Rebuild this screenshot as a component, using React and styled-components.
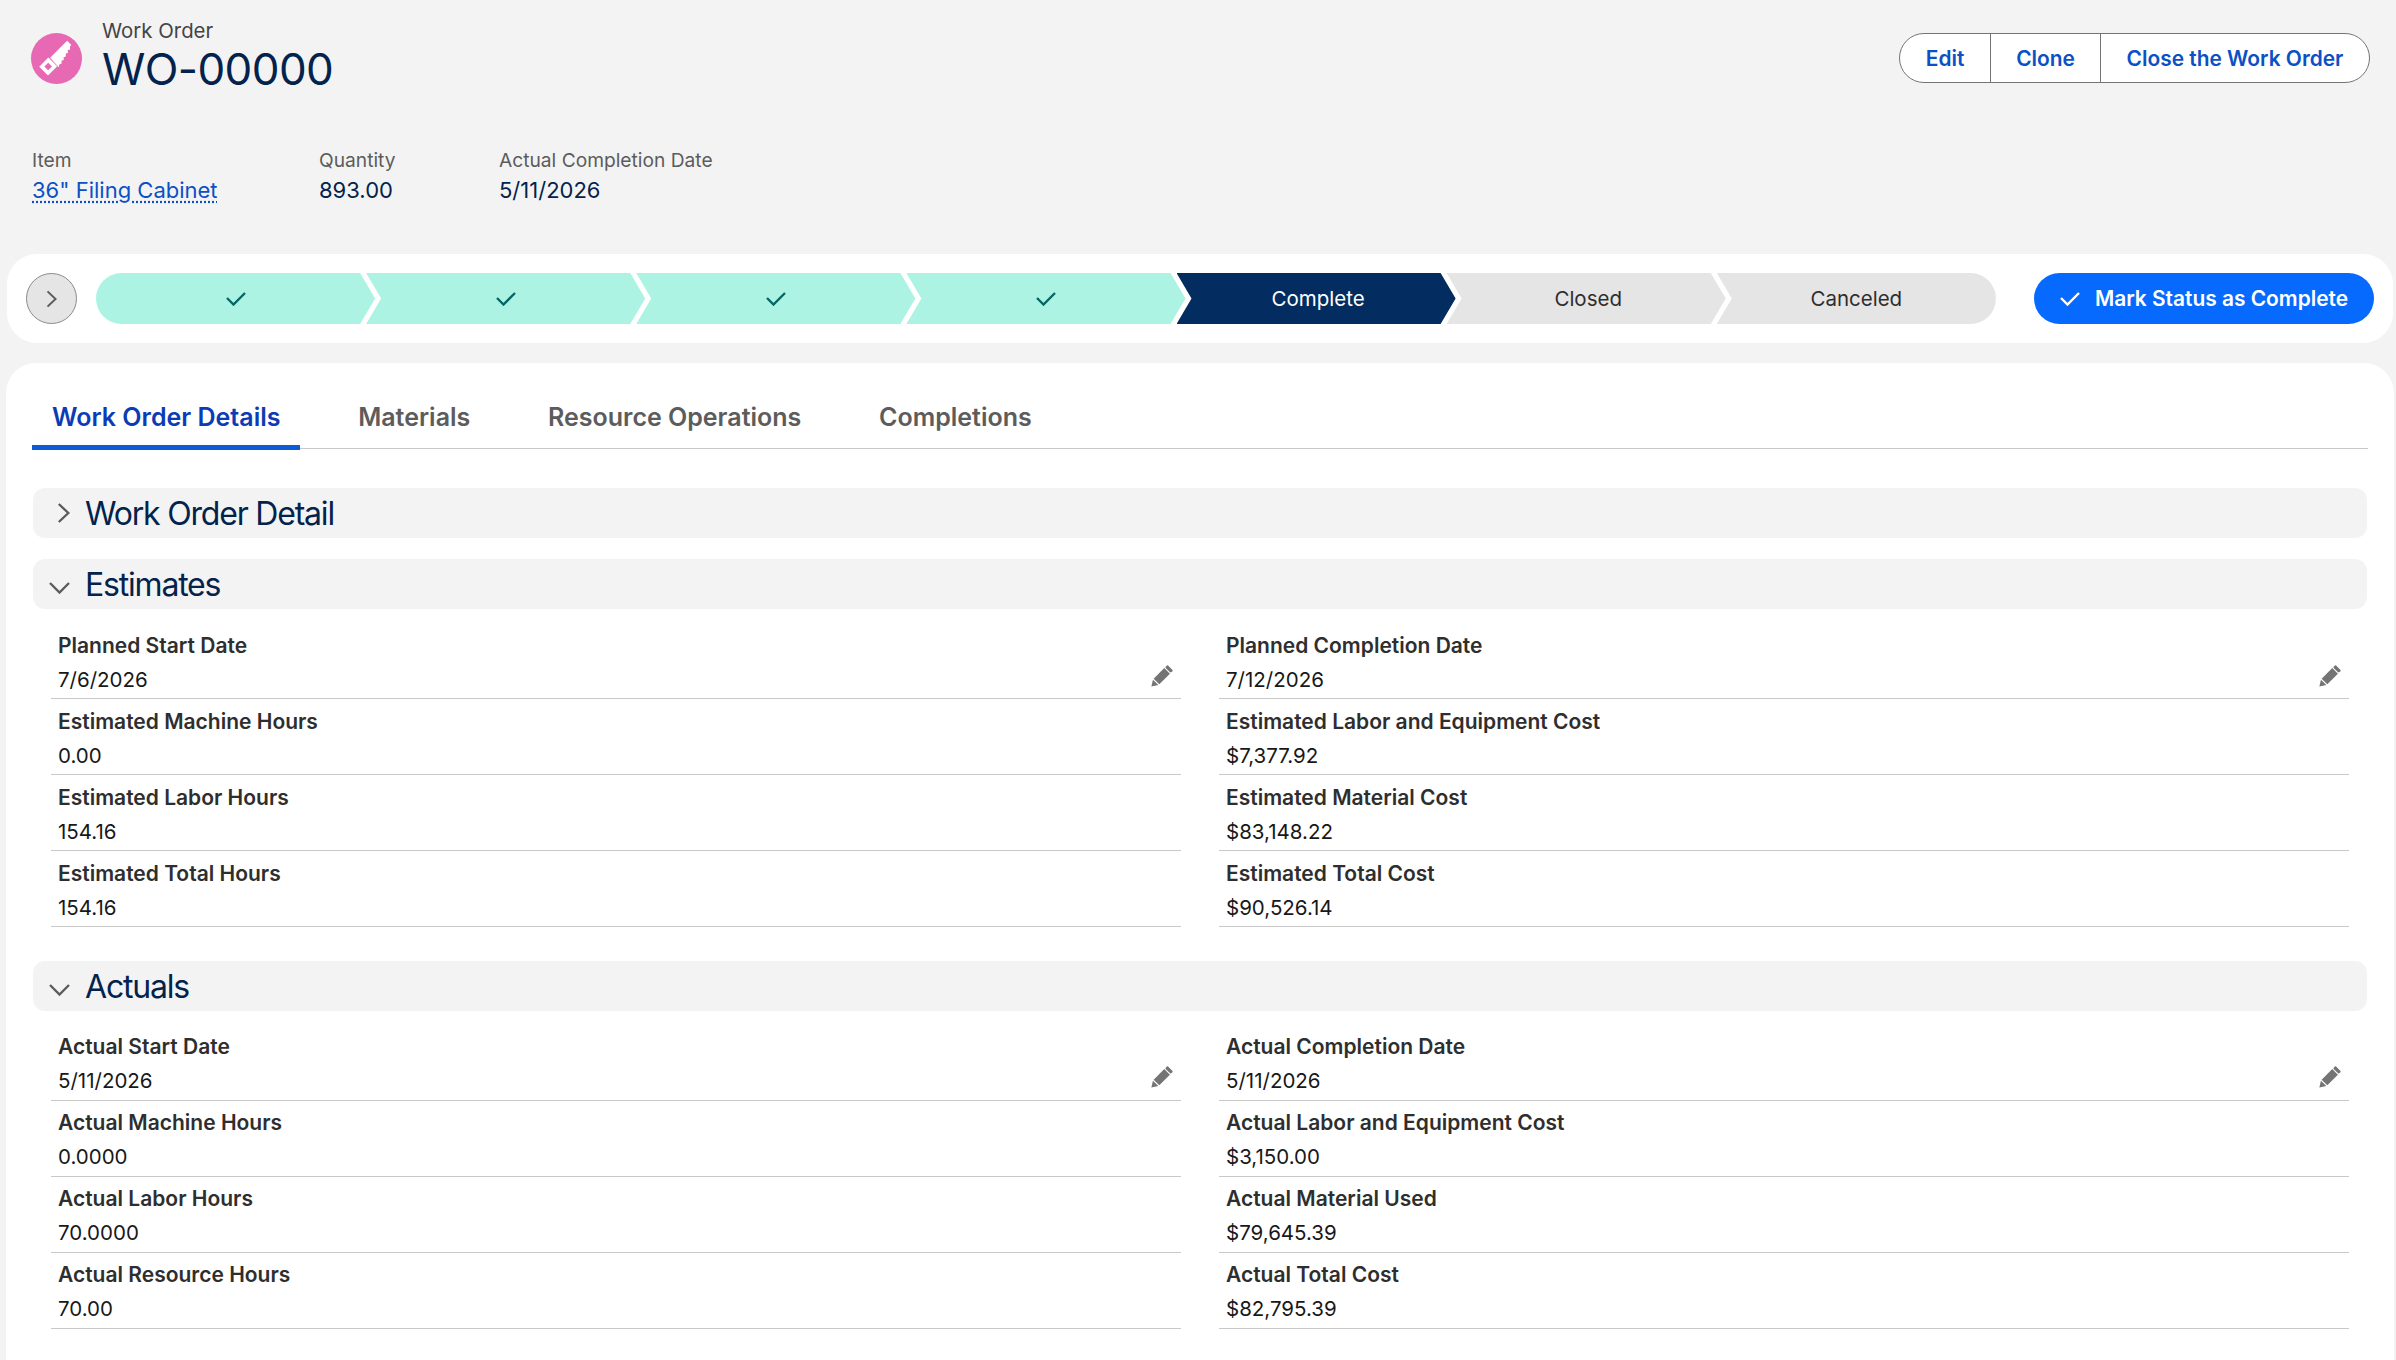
import styled, { createGlobalStyle } from "styled-components";

const GlobalStyle = createGlobalStyle`
  html, body {
    margin: 0;
    background: #f3f3f3;
    font-family: Inter, "Liberation Sans", sans-serif;
    color: #2e2e2e;
  }
  * { box-sizing: border-box; }
`;

const Page = styled.div`
  width: 2396px;
  height: 1360px;
  overflow: hidden;
  display: flex;
  flex-direction: column;
`;

const Header = styled.div`
  height: 254px;
  padding: 17px 26px 0 31px;
`;
const TitleRow = styled.div`
  display: flex;
  justify-content: space-between;
  align-items: flex-start;
`;
const TitleLeft = styled.div`
  display: flex;
  align-items: flex-start;
  gap: 20px;
`;
const RecordIcon = styled.div`
  width: 51px;
  height: 51px;
  margin-top: 16px;
  border-radius: 50%;
  background: #e769b4;
`;
const TitleText = styled.div`
  display: flex;
  flex-direction: column;
`;
const ObjectName = styled.div`
  font-size: 20.4px;
  line-height: 28px;
  color: #444444;
`;
const RecordName = styled.h1`
  margin: -1px 0 0;
  font-size: 44px;
  font-weight: 400;
  line-height: 50px;
  letter-spacing: -0.6px;
  color: #03234d;
`;
const ButtonGroup = styled.div`
  display: flex;
  height: 50px;
  margin-top: 16px;
  background: #fff;
  border: 1.5px solid #747474;
  border-radius: 25px;
`;
const GroupButton = styled.button`
  font: 600 20.9px Inter, sans-serif;
  color: #0b50c4;
  background: none;
  border: none;
  padding: 0;
  width: ${(p) => p.$w}px;
  & + & {
    border-left: 1.5px solid #747474;
  }
`;
const Highlights = styled.div`
  display: flex;
  margin: 53px 0 0 1px;
`;
const Highlight = styled.div`
  width: ${(p) => p.$w}px;
  display: flex;
  flex-direction: column;
`;
const HighlightLabel = styled.div`
  font-size: 19.2px;
  line-height: 26px;
  color: #5c5c5c;
`;
const HighlightValue = styled.div`
  font-size: 22px;
  line-height: 32px;
  margin-top: 1px;
  color: #03234d;
`;
const ItemLink = styled.a`
  color: #0b50c4;
  text-decoration: underline dotted #0b50c4;
  text-underline-offset: 3px;
`;

const PathCard = styled.div`
  display: flex;
  align-items: center;
  height: 89px;
  margin: 0 3px 0 7px;
  padding: 0 19px;
  background: #fff;
  border-radius: 30px;
`;
const PathToggle = styled.div`
  flex: none;
  width: 51px;
  height: 51px;
  display: flex;
  align-items: center;
  justify-content: center;
  margin-right: 19px;
  background: #e5e5e5;
  border: 1.5px solid #8a8a8a;
  border-radius: 50%;
`;
const Steps = styled.div`
  display: flex;
  width: 1900px;
  flex: none;
`;
const Step = styled.div`
  flex: none;
  width: 279.14px;
  height: 51px;
  display: flex;
  align-items: center;
  justify-content: center;
  padding-left: ${(p) => (p.$kind === "done" ? 0 : 4)}px;
  font-size: 20.5px;
  background: ${(p) => (p.$kind === "done" ? "#acf3e4" : p.$kind === "current" ? "#032d60" : "#e5e5e5")};
  color: ${(p) => (p.$kind === "current" ? "#fff" : "#2e2e2e")};
  clip-path: polygon(0 0, calc(100% - 15px) 0, 100% 50%, calc(100% - 15px) 100%, 0 100%, 15px 50%);
  & + & {
    margin-left: -9px;
  }
  &:first-child {
    border-radius: 26px 0 0 26px;
    clip-path: polygon(0 0, calc(100% - 15px) 0, 100% 50%, calc(100% - 15px) 100%, 0 100%);
  }
  &:last-child {
    padding-left: 0;
    border-radius: 0 26px 26px 0;
    clip-path: polygon(0 0, 100% 0, 100% 100%, 0 100%, 15px 50%);
  }
`;
const MarkButton = styled.button`
  flex: none;
  width: 340px;
  height: 51px;
  margin-left: 38px;
  display: flex;
  align-items: center;
  justify-content: center;
  gap: 15px;
  font: 600 20.9px Inter, sans-serif;
  color: #fff;
  background: #066afe;
  border: none;
  border-radius: 26px;
`;

const Card = styled.div`
  flex: 1;
  margin: 20px 2px 0 6px;
  padding: 0 26px;
  background: #fff;
  border-radius: 30px 30px 0 0;
`;
const Tabs = styled.div`
  display: flex;
  height: 86px;
  align-items: flex-end;
  border-bottom: 1.5px solid #c9c9c9;
`;
const Tab = styled.div`
  padding: 0 20px;
  margin-right: 37.7px;
  height: 52px;
  font-size: 25px;
  font-weight: 600;
  line-height: 38px;
  color: ${(p) => (p.$active ? "#0b3cb5" : "#5c5c5c")};
  border-bottom: 5px solid ${(p) => (p.$active ? "#0b5cd5" : "transparent")};
  margin-bottom: -1.5px;
`;
const SectionHeader = styled.div`
  display: flex;
  align-items: center;
  height: 50px;
  margin: ${(p) => p.$top}px 1px 0;
  background: #f3f3f3;
  border-radius: 12px;
  font-size: 32px;
  letter-spacing: -1.2px;
  color: #03234d;
`;
const ChevronSlot = styled.div`
  width: 52px;
  flex: none;
  display: flex;
  align-items: center;
  justify-content: flex-end;
  padding: ${(p) => (p.$open ? 7 : 0)}px 15px 0 0;
`;
const FieldGrid = styled.div`
  display: grid;
  grid-template-columns: 1130px 1130px;
  column-gap: 38px;
  margin: 14px 0 0 19px;
`;
const Field = styled.div`
  height: 76px;
  padding: ${(p) => p.$pad}px 0 0 7px;
  border-bottom: 1.5px solid #c9c9c9;
`;
const FieldLabel = styled.div`
  font-size: 21px;
  font-weight: 600;
  line-height: 28px;
  color: #2e2e2e;
`;
const FieldValueRow = styled.div`
  display: flex;
  justify-content: space-between;
  align-items: flex-start;
  margin-top: 6px;
`;
const FieldValue = styled.div`
  font-size: 20.5px;
  line-height: 28px;
  color: #181818;
`;
const PencilSlot = styled.div`
  display: flex;
  margin: -1px 8px 0 0;
`;

const SawIcon = () => (
  <svg width="51" height="51" viewBox="0 0 51 51">
    <g transform="rotate(-45 25.5 25.500)" fill="#fff">
      <path fillRule="evenodd" d="M7.500 19h13v12.500h-13zM11.300 22.600v5.300h5.400v-5.300z" />
      <path d="M21.500 20.500H45.500v6h-2l-2 2.200-2-1.200-2 2.200-2-1.100-2 2.100-2-1.100-2 2.100-2-1.100-2 2.100-2-1-2.500 1.500z" />
    </g>
  </svg>
);

const Check = ({ color = "#056764" }) => (
  <svg width="20" height="14" viewBox="0 0 20 14" fill="none" stroke={color} strokeWidth="2.400">
    <path d="M1 6l6.500 6.500L19 1" />
  </svg>
);

const ChevronRight = ({ w = 13, h = 20 }) => (
  <svg width={w} height={h} viewBox="0 0 13 20" fill="none" stroke="#5c5c5c" strokeWidth="2.400">
    <path d="M1.800 1l9.500 9-9.500 9" />
  </svg>
);

const ChevronDown = () => (
  <svg width="21" height="12" viewBox="0 0 21 12" fill="none" stroke="#5c5c5c" strokeWidth="2.400">
    <path d="M1 1l9.500 9.500L20 1" />
  </svg>
);

const Pencil = () => (
  <svg width="22" height="22" viewBox="0 0 22 22" fill="#747474">
    <g transform="rotate(-45 11 11)">
      <path d="M-4 11L2 7.200v7.600z" />
      <rect x="3.200" y="7" width="15" height="8" />
      <rect x="19.300" y="7" width="3.400" height="8" rx="1.200" />
    </g>
  </svg>
);

const estimates = [
  ["Planned Start Date", "7/6/2026", true],
  ["Planned Completion Date", "7/12/2026", true],
  ["Estimated Machine Hours", "0.00"],
  ["Estimated Labor and Equipment Cost", "$7,377.92"],
  ["Estimated Labor Hours", "154.16"],
  ["Estimated Material Cost", "$83,148.22"],
  ["Estimated Total Hours", "154.16"],
  ["Estimated Total Cost", "$90,526.14"],
];

const actuals = [
  ["Actual Start Date", "5/11/2026", true],
  ["Actual Completion Date", "5/11/2026", true],
  ["Actual Machine Hours", "0.0000"],
  ["Actual Labor and Equipment Cost", "$3,150.00"],
  ["Actual Labor Hours", "70.0000"],
  ["Actual Material Used", "$79,645.39"],
  ["Actual Resource Hours", "70.00"],
  ["Actual Total Cost", "$82,795.39"],
];

const Fields = ({ rows, pad }) => (
  <FieldGrid>
    {rows.map(([label, value, editable]) => (
      <Field key={label} $pad={pad}>
        <FieldLabel>{label}</FieldLabel>
        <FieldValueRow>
          <FieldValue>{value}</FieldValue>
          {editable && (
            <PencilSlot>
              <Pencil />
            </PencilSlot>
          )}
        </FieldValueRow>
      </Field>
    ))}
  </FieldGrid>
);

export default function App() {
  return (
    <Page>
      <GlobalStyle />
      <Header>
        <TitleRow>
          <TitleLeft>
            <RecordIcon>
              <SawIcon />
            </RecordIcon>
            <TitleText>
              <ObjectName>Work Order</ObjectName>
              <RecordName>WO-00000</RecordName>
            </TitleText>
          </TitleLeft>
          <ButtonGroup>
            <GroupButton $w={90}>Edit</GroupButton>
            <GroupButton $w={110}>Clone</GroupButton>
            <GroupButton $w={269}>Close the Work Order</GroupButton>
          </ButtonGroup>
        </TitleRow>
        <Highlights>
          <Highlight $w={287}>
            <HighlightLabel>Item</HighlightLabel>
            <HighlightValue>
              <ItemLink>36" Filing Cabinet</ItemLink>
            </HighlightValue>
          </Highlight>
          <Highlight $w={180}>
            <HighlightLabel>Quantity</HighlightLabel>
            <HighlightValue>893.00</HighlightValue>
          </Highlight>
          <Highlight $w={300}>
            <HighlightLabel>Actual Completion Date</HighlightLabel>
            <HighlightValue>5/11/2026</HighlightValue>
          </Highlight>
        </Highlights>
      </Header>

      <PathCard>
        <PathToggle>
          <ChevronRight w={11} h={18} />
        </PathToggle>
        <Steps>
          <Step $kind="done"><Check /></Step>
          <Step $kind="done"><Check /></Step>
          <Step $kind="done"><Check /></Step>
          <Step $kind="done"><Check /></Step>
          <Step $kind="current">Complete</Step>
          <Step>Closed</Step>
          <Step>Canceled</Step>
        </Steps>
        <MarkButton>
          <Check color="#fff" />
          Mark Status as Complete
        </MarkButton>
      </PathCard>

      <Card>
        <Tabs>
          <Tab $active>Work Order Details</Tab>
          <Tab>Materials</Tab>
          <Tab>Resource Operations</Tab>
          <Tab>Completions</Tab>
        </Tabs>
        <SectionHeader $top={39}>
          <ChevronSlot><ChevronRight /></ChevronSlot>
          Work Order Detail
        </SectionHeader>
        <SectionHeader $top={21}>
          <ChevronSlot $open><ChevronDown /></ChevronSlot>
          Estimates
        </SectionHeader>
        <Fields rows={estimates} pad={9} />
        <SectionHeader $top={34}>
          <ChevronSlot $open><ChevronDown /></ChevronSlot>
          Actuals
        </SectionHeader>
        <Fields rows={actuals} pad={8} />
      </Card>
    </Page>
  );
}
